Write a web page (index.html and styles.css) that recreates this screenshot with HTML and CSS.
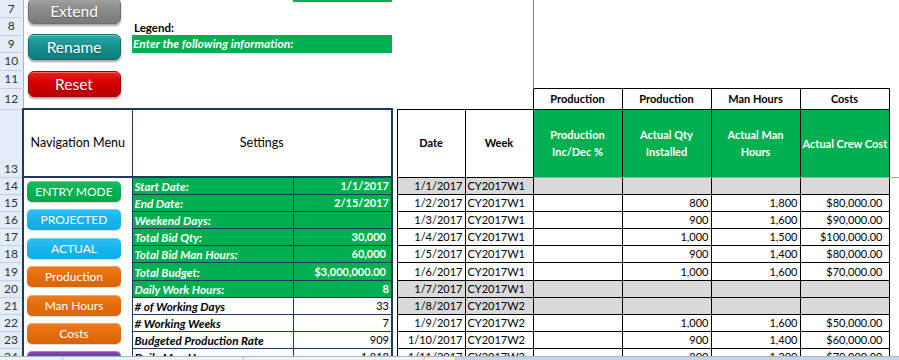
FILE: index.html
```html
<!DOCTYPE html>
<html lang="en">
<head>
    <meta charset="UTF-8">
    <meta name="viewport" content="width=device-width, initial-scale=1.0">
    <title>Production Tracker</title>
    <link rel="stylesheet" href="styles.css">
</head>
<body>
<div class="window">
    <div class="sheet-area">
        <table class="sheet">
            <colgroup>
                <col class="c-rh">
                <col class="c-nav">
                <col class="c-lbl">
                <col class="c-val">
                <col class="c-gap">
                <col class="c-date">
                <col class="c-week">
                <col class="c-data">
                <col class="c-data">
                <col class="c-data">
                <col class="c-data">
                <col class="c-rest">
            </colgroup>

            <!-- rows 7 - 12: action buttons and legend -->
            <tr class="r7">
                <td class="rh">7</td>
                <td class="btn-cell" rowspan="6">
                    <div class="top-stack">
                        <div class="big-btn extend">Extend</div>
                        <div class="big-btn rename">Rename</div>
                        <div class="big-btn reset">Reset</div>
                    </div>
                </td>
                <td></td>
                <td class="green-edge"></td>
                <td></td><td></td><td></td>
                <td class="split"></td><td></td><td></td><td></td><td></td>
            </tr>
            <tr class="r8">
                <td class="rh">8</td>
                <td class="legend">Legend:</td>
                <td></td>
                <td></td><td></td><td></td>
                <td class="split"></td><td></td><td></td><td></td><td></td>
            </tr>
            <tr class="r9">
                <td class="rh">9</td>
                <td class="legend-bar" colspan="2">Enter the following information:</td>
                <td></td><td></td><td></td>
                <td class="split"></td><td></td><td></td><td></td><td></td>
            </tr>
            <tr class="r10">
                <td class="rh">10</td>
                <td></td><td></td>
                <td></td><td></td><td></td>
                <td class="split"></td><td></td><td></td><td></td><td></td>
            </tr>
            <tr class="r11">
                <td class="rh">11</td>
                <td></td><td></td>
                <td></td><td></td><td></td>
                <td class="split"></td><td></td><td></td><td></td><td></td>
            </tr>
            <tr class="r12">
                <td class="rh">12</td>
                <td></td><td></td>
                <td></td><td></td><td></td>
                <td class="hdr">Production</td>
                <td class="hdr">Production</td>
                <td class="hdr">Man Hours</td>
                <td class="hdr">Costs</td>
                <td></td>
            </tr>

            <!-- row 13: headings -->
            <tr class="r13">
                <td class="rh rh-low">13</td>
                <td class="box-head nav-head">Navigation Menu</td>
                <td class="box-head set-head" colspan="2">Settings</td>
                <td></td>
                <td class="col-head">Date</td>
                <td class="col-head">Week</td>
                <td class="ghdr">Production<br>Inc/Dec %</td>
                <td class="ghdr">Actual Qty<br>Installed</td>
                <td class="ghdr">Actual Man<br>Hours</td>
                <td class="ghdr">Actual Crew Cost</td>
                <td></td>
            </tr>

            <!-- rows 14 - 24: settings and daily log -->
            <tr class="row">
                <td class="rh">14</td>
                <td class="nav-cell" rowspan="11">
                    <div class="nav-stack">
                        <div class="nav-btn green">ENTRY MODE</div>
                        <div class="nav-btn blue">PROJECTED</div>
                        <div class="nav-btn blue">ACTUAL</div>
                        <div class="nav-btn orange">Production</div>
                        <div class="nav-btn orange">Man Hours</div>
                        <div class="nav-btn orange">Costs</div>
                        <div class="nav-btn purple">Reports</div>
                    </div>
                </td>
                <td class="lbl input">Start Date:</td>
                <td class="val input">1/1/2017</td>
                <td></td>
                <td class="dt off">1/1/2017</td>
                <td class="wk off">CY2017W1</td>
                <td class="off"></td><td class="off"></td><td class="off"></td><td class="off"></td>
                <td class="tail"></td>
            </tr>
            <tr class="row">
                <td class="rh">15</td>
                <td class="lbl input">End Date:</td>
                <td class="val input">2/15/2017</td>
                <td></td>
                <td class="dt">1/2/2017</td>
                <td class="wk">CY2017W1</td>
                <td></td>
                <td class="num">800</td>
                <td class="num">1,800</td>
                <td class="num money">$80,000.00</td>
                <td></td>
            </tr>
            <tr class="row">
                <td class="rh">16</td>
                <td class="lbl input">Weekend Days:</td>
                <td class="val input"></td>
                <td></td>
                <td class="dt">1/3/2017</td>
                <td class="wk">CY2017W1</td>
                <td></td>
                <td class="num">900</td>
                <td class="num">1,600</td>
                <td class="num money">$90,000.00</td>
                <td></td>
            </tr>
            <tr class="row">
                <td class="rh">17</td>
                <td class="lbl input">Total Bid Qty:</td>
                <td class="val input pad">30,000</td>
                <td></td>
                <td class="dt">1/4/2017</td>
                <td class="wk">CY2017W1</td>
                <td></td>
                <td class="num">1,000</td>
                <td class="num">1,500</td>
                <td class="num money">$100,000.00</td>
                <td></td>
            </tr>
            <tr class="row">
                <td class="rh">18</td>
                <td class="lbl input">Total Bid Man Hours:</td>
                <td class="val input pad">60,000</td>
                <td></td>
                <td class="dt">1/5/2017</td>
                <td class="wk">CY2017W1</td>
                <td></td>
                <td class="num">900</td>
                <td class="num">1,400</td>
                <td class="num money">$80,000.00</td>
                <td></td>
            </tr>
            <tr class="row">
                <td class="rh">19</td>
                <td class="lbl input">Total Budget:</td>
                <td class="val input pad">$3,000,000.00</td>
                <td></td>
                <td class="dt">1/6/2017</td>
                <td class="wk">CY2017W1</td>
                <td></td>
                <td class="num">1,000</td>
                <td class="num">1,600</td>
                <td class="num money">$70,000.00</td>
                <td></td>
            </tr>
            <tr class="row">
                <td class="rh">20</td>
                <td class="lbl input">Daily Work Hours:</td>
                <td class="val input">8</td>
                <td></td>
                <td class="dt off">1/7/2017</td>
                <td class="wk off">CY2017W1</td>
                <td class="off"></td><td class="off"></td><td class="off"></td><td class="off"></td>
                <td></td>
            </tr>
            <tr class="row">
                <td class="rh">21</td>
                <td class="lbl">&#35; of Working Days</td>
                <td class="val">33</td>
                <td></td>
                <td class="dt off">1/8/2017</td>
                <td class="wk off">CY2017W2</td>
                <td class="off"></td><td class="off"></td><td class="off"></td><td class="off"></td>
                <td></td>
            </tr>
            <tr class="row">
                <td class="rh">22</td>
                <td class="lbl">&#35; Working Weeks</td>
                <td class="val">7</td>
                <td></td>
                <td class="dt">1/9/2017</td>
                <td class="wk">CY2017W2</td>
                <td></td>
                <td class="num">1,000</td>
                <td class="num">1,600</td>
                <td class="num money">$50,000.00</td>
                <td></td>
            </tr>
            <tr class="row">
                <td class="rh">23</td>
                <td class="lbl">Budgeted Production Rate</td>
                <td class="val">909</td>
                <td></td>
                <td class="dt">1/10/2017</td>
                <td class="wk">CY2017W2</td>
                <td></td>
                <td class="num">900</td>
                <td class="num">1,400</td>
                <td class="num money">$60,000.00</td>
                <td></td>
            </tr>
            <tr class="row">
                <td class="rh">24</td>
                <td class="lbl">Daily Man Hours</td>
                <td class="val">1,818</td>
                <td></td>
                <td class="dt">1/11/2017</td>
                <td class="wk">CY2017W2</td>
                <td></td>
                <td class="num">800</td>
                <td class="num">1,200</td>
                <td class="num money">$70,000.00</td>
                <td></td>
            </tr>
        </table>
    </div>

    <div class="tab-strip">
        <span class="tab tab-first"></span>
        <span class="tab"></span>
        <span class="tab"></span>
        <span class="tab tab-active"></span>
        <span class="tab-fill"></span>
    </div>
</div>
</body>
</html>
```

FILE: styles.css
```css
body {
    margin: 0;
    background-color: white;
    font-family: Lato, 'Liberation Sans', sans-serif;
    color: #000;
}

.window {
    width: 899px;
    height: 360px;
    display: flex;
    flex-direction: column;
    overflow: hidden;
}

.sheet-area {
    height: 356px;
    overflow: hidden;
    flex-shrink: 0;
}

.sheet {
    width: 899px;
    table-layout: fixed;
    border-collapse: collapse;
    font-size: 11px;
}

.c-rh { width: 23px; }
.c-nav { width: 109px; }
.c-lbl { width: 161px; }
.c-val { width: 99px; }
.c-gap { width: 5px; }
.c-date { width: 68px; }
.c-week { width: 68px; }
.c-data { width: 89px; }
.c-rest { width: 10px; }

.sheet td {
    padding: 0 2px;
    white-space: nowrap;
    overflow: hidden;
    line-height: 14px;
}

/* row heights */
.r7, .r8, .r9, .r10 { height: 17.5px; }
.r11 { height: 18px; }
.r12 { height: 21px; }
.r13 { height: 68px; }
.row { height: 17.2px; }

/* row headers */
.sheet td.rh {
    background-color: #e4ecf7;
    border-right: 1px solid #9eb6ce;
    border-bottom: 1px solid #c3d1e2;
    text-align: center;
    font-size: 12px;
    color: #333;
    padding: 0;
}

.sheet td.rh-low {
    vertical-align: bottom;
    padding-bottom: 1px;
}

/* top buttons */
.btn-cell,
.nav-cell {
    vertical-align: top;
    padding: 0 !important;
}

.top-stack {
    display: flex;
    flex-direction: column;
    gap: 10.3px;
    margin-top: -2px;
    padding-left: 4px;
}

.big-btn {
    width: 91px;
    height: 24px;
    border-radius: 6px;
    color: white;
    font-size: 15.5px;
    line-height: 25px;
    text-align: center;
    text-shadow: 0 1px 1px rgba(0,0,0,0.35);
    box-shadow: 0 2px 2px rgba(0,0,0,0.35), inset 0 1px 0 rgba(255,255,255,0.35);
}

.extend {
    background: linear-gradient(#a3a3a3, #8a8a8a 45%, #7a7a7a);
    border: 1px solid #6f6f6f;
}

.rename {
    background: linear-gradient(#2eaaa9, #17918f 45%, #0d7f7d);
    border: 1px solid #0b6f6d;
}

.reset {
    background: linear-gradient(#ec2020, #d20000 45%, #bb0000);
    border: 1px solid #a30000;
}

/* legend */
.legend {
    font-weight: bold;
    font-size: 11.5px;
    vertical-align: bottom;
}

.sheet td.legend-bar {
    background-color: #00b050;
    color: white;
    font-weight: bold;
    font-style: italic;
    font-size: 12px;
    padding-left: 1px;
}

.green-edge {
    box-shadow: inset 0 2px 0 #00b050;
}

.split {
    border-left: 1px solid #7f7f7f;
}

/* column headings */
.hdr {
    border: 1px solid #000;
    text-align: center;
    font-weight: bold;
}

.r12 .hdr:first-child {
    border-left-color: #7f7f7f;
}

.box-head {
    border-top: 2px solid #1f3a5f;
    border-bottom: 2px solid #1f3a5f;
    text-align: center;
    font-size: 12.5px;
}

.nav-head {
    border-left: 2px solid #1f3a5f;
    border-right: 1px solid #1f3a5f;
}

.set-head {
    border-right: 2px solid #1f3a5f;
}

.col-head {
    border: 1px solid #000;
    text-align: center;
    font-weight: bold;
}

.ghdr {
    background-color: #00b050;
    color: white;
    font-weight: bold;
    text-align: center;
    line-height: 17px !important;
    border: 1px solid #000;
    border-bottom-color: #a6a6a6;
}

/* navigation buttons */
.nav-cell {
    border-left: 2px solid #1f3a5f;
    border-right: 1px solid #1f3a5f;
}

.nav-stack {
    height: 179px;
    overflow: hidden;
    display: flex;
    flex-direction: column;
    gap: 7.4px;
    padding: 3px 0 0 3px;
    box-sizing: border-box;
}

.nav-btn {
    flex-shrink: 0;
    width: 94px;
    height: 21px;
    border-radius: 5px;
    color: white;
    font-size: 12px;
    line-height: 21px;
    text-align: center;
    box-shadow: inset 0 1px 0 rgba(255,255,255,0.3), 0 1px 1px rgba(0,0,0,0.15);
}

.nav-btn.green { background: linear-gradient(#1dbd62, #00b050 50%, #00a84a); }
.nav-btn.blue { background: linear-gradient(#2fc0f3, #17b4ee 50%, #0eacea); }
.nav-btn.orange { background: linear-gradient(#ee7d22, #e46c0a 50%, #d86508); }
.nav-btn.purple { background: linear-gradient(#8348b0, #7030a0 50%, #652a92); }

/* settings block */
.lbl,
.val {
    border-bottom: 1px solid #1f3a5f;
    font-weight: bold;
}

.lbl {
    font-style: italic;
    font-size: 11.7px;
    border-right: 1px solid #1f3a5f;
}

.val {
    text-align: right;
    font-weight: normal;
    border-right: 2px solid #1f3a5f;
}

.input {
    background-color: #00b050;
    color: white;
}

.val.input {
    font-weight: bold;
}

.sheet td.pad {
    padding-right: 5px;
}

/* daily log */
.dt,
.wk,
.row .num,
.row td:nth-child(7) {
    border: 1px solid #000;
}

.row:first-of-type td {
    border-top-color: #a6a6a6;
}

.dt {
    text-align: right;
}

.num {
    text-align: right;
}

.sheet td.money {
    padding-right: 6px;
}

.off {
    background-color: #d9d9d9;
    border: 1px solid #000;
}

.tail {
    border-top: 1px solid #a6a6a6;
}

/* sheet tabs */
.tab-strip {
    flex: 1;
    display: flex;
    background-color: #dfe7f1;
    border-top: 1px solid #9eb6ce;
}

.tab {
    width: 180px;
    background: linear-gradient(#f4f6fa, #e8edf4);
    border-right: 1px solid #9eb6ce;
    transform: skewX(-30deg);
}

.tab-first {
    width: 62px;
}

.tab-active {
    width: 30px;
    background: #f6f0e0;
}

.tab-fill {
    flex: 1;
    background-color: #c6d4e6;
}
```
